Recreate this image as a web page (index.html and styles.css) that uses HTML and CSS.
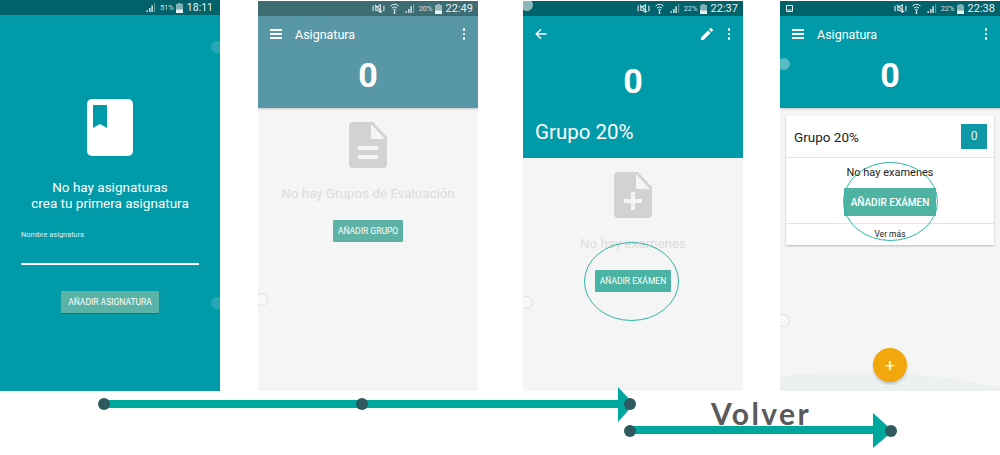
FILE: index.html
```html
<!DOCTYPE html>
<html lang="es">
<head>
    <meta charset="UTF-8">
    <title>Flujo de asignaturas</title>
    <link rel="stylesheet" href="styles.css">
</head>
<body>
    <svg class="defs" width="0" height="0">
        <symbol id="i-mute" viewBox="0 0 14 10">
            <path d="M1 2v6M13 2v6M4 3h2l3-2v8L6 7H4zM3 1l8 8" fill="none" stroke="currentColor" stroke-width="1.2"/>
        </symbol>
        <symbol id="i-wifi" viewBox="0 0 9 11">
            <path d="M0.5 3Q4.5 -0.5 8.5 3M2 5Q4.5 2.8 7 5M3.2 6.8Q4.5 5.8 5.8 6.8" fill="none" stroke="currentColor" stroke-width="1"/>
            <path d="M4.5 7.5v3.5" stroke="currentColor" stroke-width="1.4"/>
        </symbol>
        <symbol id="i-signal" viewBox="0 0 10 10">
            <path d="M0 10h1.5V8H0zM3 10h1.5V5.5H3zM5.5 10H7V2.5H5.5z" fill="currentColor"/>
            <path d="M8.6 10h1V0h-1z" fill="currentColor" opacity=".5"/>
        </symbol>
        <symbol id="i-battery" viewBox="0 0 7 10">
            <path d="M2 0h3v1h2v9H0V1h2z" fill="currentColor" opacity=".55"/>
            <path d="M0 6.5h7V10H0z" fill="currentColor"/>
        </symbol>
        <symbol id="i-doc" viewBox="0 0 38 46">
            <path d="M4 0h20l14 15v27a4 4 0 0 1-4 4H4a4 4 0 0 1-4-4V4a4 4 0 0 1 4-4z" fill="#d2d2d2"/>
            <path d="M22 2l14 15H22z" fill="#f5f5f5"/>
        </symbol>
    </svg>

    <div class="screens">
        <!-- pantalla 1: sin asignaturas -->
        <section class="screen screen-welcome">
            <div class="status status-dark">
                <svg class="ic-signal"><use href="#i-signal"/></svg>
                <span class="pct">51%</span>
                <svg class="ic-battery"><use href="#i-battery"/></svg>
                <span class="time">18:11</span>
            </div>
            <div class="welcome">
                <svg class="book" viewBox="0 0 46 57">
                    <rect width="46" height="57" rx="5" fill="#fff"/>
                    <path d="M6 6h14v23l-7-4-7 4z" fill="#009aa8"/>
                </svg>
                <p class="welcome-text">No hay asignaturas<br>crea tu primera asignatura</p>
                <label class="field-label">Nombre asignatura</label>
                <div class="field-line"></div>
                <button class="btn btn-welcome">AÑADIR ASIGNATURA</button>
            </div>
            <span class="dot dot-a"></span>
            <span class="dot dot-b"></span>
        </section>

        <!-- pantalla 2: sin grupos -->
        <section class="screen screen-dim">
            <div class="status status-dim">
                <svg class="ic-mute"><use href="#i-mute"/></svg>
                <svg class="ic-wifi"><use href="#i-wifi"/></svg>
                <svg class="ic-signal"><use href="#i-signal"/></svg>
                <span class="pct">20%</span>
                <svg class="ic-battery"><use href="#i-battery"/></svg>
                <span class="time">22:49</span>
            </div>
            <header class="appbar appbar-dim">
                <div class="toolbar">
                    <span class="burger"><i></i><i></i><i></i></span>
                    <span class="title">Asignatura</span>
                    <span class="more"><i></i><i></i><i></i></span>
                </div>
                <div class="count">0</div>
            </header>
            <div class="empty">
                <svg class="doc" viewBox="0 0 38 46">
                    <use href="#i-doc"/>
                    <path d="M9 24h20v4H9zM9 33h20v4H9z" fill="#f5f5f5"/>
                </svg>
                <p class="empty-text">No hay Grupos de Evaluación</p>
                <button class="btn btn-group">AÑADIR GRUPO</button>
            </div>
            <span class="ring ring-2"></span>
        </section>

        <!-- pantalla 3: grupo sin examenes -->
        <section class="screen">
            <div class="status status-dark">
                <svg class="ic-mute"><use href="#i-mute"/></svg>
                <svg class="ic-wifi"><use href="#i-wifi"/></svg>
                <svg class="ic-signal"><use href="#i-signal"/></svg>
                <span class="pct">22%</span>
                <svg class="ic-battery"><use href="#i-battery"/></svg>
                <span class="time">22:37</span>
            </div>
            <header class="appbar appbar-group">
                <div class="toolbar">
                    <svg class="back" viewBox="0 0 12 12">
                        <path d="M11.5 6H1.5M6 1.2L1.2 6 6 10.8" fill="none" stroke="#fff" stroke-width="1.4"/>
                    </svg>
                    <span class="title"></span>
                    <svg class="pencil" viewBox="0 0 12 12">
                        <path d="M0 9.5V12h2.5L9.6 4.9 7.1 2.4zM11.8 2.7a.7.7 0 0 0 0-1L10.3.2a.7.7 0 0 0-1 0L8 1.5 10.5 4z" fill="#fff"/>
                    </svg>
                    <span class="more"><i></i><i></i><i></i></span>
                </div>
                <div class="count count-group">0</div>
                <div class="group-name">Grupo 20%</div>
            </header>
            <div class="empty">
                <svg class="doc" viewBox="0 0 38 46">
                    <use href="#i-doc"/>
                    <path d="M17 20h4v7h7v4h-7v7h-4v-7h-7v-4h7z" fill="#f5f5f5"/>
                </svg>
                <p class="empty-text">No hay examenes</p>
                <button class="btn btn-exam">AÑADIR EXÁMEN</button>
            </div>
            <span class="dot dot-c"></span>
            <span class="ring ring-3"></span>
        </section>

        <!-- pantalla 4: grupo creado -->
        <section class="screen">
            <div class="status status-dark">
                <svg class="ic-pic" viewBox="0 0 7 7">
                    <path d="M.5.5h6v6h-6zM1.5 5h4" fill="none" stroke="currentColor"/>
                </svg>
                <span class="status-gap"></span>
                <svg class="ic-mute"><use href="#i-mute"/></svg>
                <svg class="ic-wifi"><use href="#i-wifi"/></svg>
                <svg class="ic-signal"><use href="#i-signal"/></svg>
                <span class="pct">22%</span>
                <svg class="ic-battery"><use href="#i-battery"/></svg>
                <span class="time">22:38</span>
            </div>
            <header class="appbar">
                <div class="toolbar">
                    <span class="burger"><i></i><i></i><i></i></span>
                    <span class="title">Asignatura</span>
                    <span class="more"><i></i><i></i><i></i></span>
                </div>
                <div class="count">0</div>
            </header>
            <div class="card">
                <div class="card-head">
                    <span>Grupo 20%</span>
                    <span class="badge">0</span>
                </div>
                <div class="card-body">
                    <p>No hay examenes</p>
                    <button class="btn btn-card">AÑADIR EXÁMEN</button>
                </div>
                <div class="card-foot">Ver más</div>
            </div>
            <span class="dot dot-d"></span>
            <span class="ring ring-4"></span>
            <span class="curve"></span>
            <span class="fab">+</span>
        </section>
    </div>

    <!-- flechas y marcas encima de las pantallas -->
    <svg class="marks" viewBox="0 0 1000 455">
        <ellipse cx="631.5" cy="281.5" rx="47" ry="39" fill="none" stroke="#2bb5a5" stroke-width="1"/>
        <ellipse cx="890.5" cy="201.5" rx="47" ry="39" fill="none" stroke="#2bb5a5" stroke-width="1"/>

        <path d="M104 400h516v8H104z" fill="#00a79c"/>
        <path d="M618 387l16 17-16 18z" fill="#00a79c"/>
        <circle cx="104" cy="404" r="6" fill="#2d5a5e"/>
        <circle cx="362" cy="404" r="6" fill="#2d5a5e"/>
        <circle cx="630" cy="404" r="6" fill="#2d5a5e"/>

        <path d="M630 426h246v8H630z" fill="#00a79c"/>
        <path d="M873 413l20 18-20 17z" fill="#00a79c"/>
        <circle cx="630" cy="431" r="6" fill="#2d5a5e"/>
        <circle cx="891" cy="431" r="6" fill="#2d5a5e"/>
    </svg>
    <div class="volver">Volver</div>
</body>
</html>
```

FILE: styles.css
```css
html, body {
    margin: 0;
    height: 455px;
    overflow: hidden;
    background: #fff;
}
body {
    position: relative;
    font-family: Roboto, "Liberation Sans", sans-serif;
}
p {
    margin: 0;
}
.defs {
    position: absolute;
}
.screens {
    display: flex;
    align-items: flex-start;
}
.screen {
    position: relative;
    display: flex;
    flex-direction: column;
    flex: none;
    width: 220px;
    height: 390px;
    margin-top: 1px;
    overflow: hidden;
    background: #f5f5f5;
}
.screen:nth-child(2) {
    margin-left: 38px;
}
.screen:nth-child(3) {
    margin-left: 45px;
}
.screen:nth-child(4) {
    margin-left: 37px;
}
.screen-welcome {
    height: 391px;
    margin-top: 0;
    background: #009aa8;
}

/* barra de estado */
.status {
    display: flex;
    align-items: center;
    flex: none;
    height: 15px;
    padding: 0 5px;
    justify-content: flex-end;
    color: #e8f1f2;
}
.status-dark {
    background: #02626b;
}
.status-dim {
    background: #3d6c72;
}
.screen-welcome .status {
    padding-right: 7px;
}
.status svg {
    flex: none;
}
.ic-mute {
    width: 13px;
    height: 9px;
    margin-right: 5px;
}
.ic-wifi {
    width: 9px;
    height: 11px;
    margin-right: 6px;
}
.ic-signal {
    width: 10px;
    height: 9px;
    margin-right: 4px;
}
.ic-battery {
    width: 7px;
    height: 10px;
    margin: 0 4px 0 2px;
}
.ic-pic {
    width: 7px;
    height: 7px;
    margin-left: 1px;
}
.status-gap {
    flex: 1;
}
.pct {
    font-size: 7.5px;
    opacity: .85;
}
.time {
    font-size: 11px;
    line-height: 15px;
}
.screen-welcome .time {
    font-size: 10.5px;
}

/* pantalla de bienvenida */
.welcome {
    display: flex;
    flex-direction: column;
    align-items: center;
    padding-top: 84px;
    color: #fff;
}
.book {
    width: 46px;
    height: 57px;
}
.welcome-text {
    margin-top: 23px;
    font-size: 13.5px;
    line-height: 16px;
    text-align: center;
}
.field-label {
    align-self: flex-start;
    margin: 19px 0 0 21px;
    color: #d8f0f2;
    font-size: 7.4px;
    line-height: 10px;
}
.field-line {
    align-self: flex-start;
    width: 178px;
    height: 1.5px;
    margin: 23px 0 0 21px;
    background: #fff;
}

/* botones */
.btn {
    display: block;
    padding: 0;
    border: none;
    border-radius: 1px;
    color: #fff;
    font-family: Roboto, "Liberation Sans", sans-serif;
    text-align: center;
}
.btn-welcome {
    width: 98px;
    height: 22px;
    margin-top: 26px;
    background: #5ab3a6;
    font-size: 8.5px;
    box-shadow: 0 1px 1px rgba(0, 60, 70, .3);
}
.btn-group {
    width: 70px;
    height: 22px;
    margin-top: 17px;
    background: #5eb2a5;
    font-size: 8.5px;
}
.btn-exam {
    width: 76px;
    height: 22px;
    margin-top: 17px;
    background: #4bb3a3;
    font-size: 8.5px;
}
.btn-card {
    width: 92px;
    height: 28px;
    margin: 9px auto 0;
    background: #4fb3a3;
    font-size: 10px;
    font-weight: 500;
}

/* cabecera */
.appbar {
    flex: none;
    height: 92px;
    background: #009aa8;
    color: #fff;
    box-shadow: 0 1px 2px rgba(0, 0, 0, .2);
}
.appbar-dim {
    background: #5898a6;
}
.appbar-group {
    height: 142px;
    box-shadow: none;
}
.toolbar {
    display: flex;
    align-items: center;
    height: 36px;
    padding: 0 12px;
}
.burger {
    display: flex;
    flex-direction: column;
    gap: 2.5px;
    width: 12px;
}
.burger i {
    display: block;
    height: 1.5px;
    background: #fff;
}
.title {
    flex: 1;
    margin-left: 13px;
    font-size: 12.5px;
}
.more {
    display: flex;
    flex-direction: column;
    gap: 2px;
    margin-right: 1px;
}
.more i {
    display: block;
    width: 2.5px;
    height: 2.5px;
    border-radius: 50%;
    background: #fff;
}
.back {
    width: 12px;
    height: 12px;
}
.pencil {
    width: 12px;
    height: 12px;
    margin-right: 15px;
}
.count {
    margin-top: 3px;
    font-size: 34px;
    font-weight: 700;
    line-height: 40px;
    text-align: center;
}
.count-group {
    margin-top: 9px;
}
.group-name {
    margin: 18px 0 0 12px;
    font-size: 20.5px;
    line-height: 26px;
}

/* estados vacios */
.empty {
    display: flex;
    flex-direction: column;
    align-items: center;
    padding-top: 14px;
}
.doc {
    width: 38px;
    height: 46px;
}
.empty-text {
    margin-top: 17px;
    color: #dcdcdc;
    font-size: 13.4px;
    line-height: 18px;
}

/* tarjeta */
.card {
    display: flex;
    flex-direction: column;
    margin: 8px 6px 0;
    height: 129px;
    background: #fff;
    box-shadow: 0 1px 2px rgba(0, 0, 0, .25);
    color: #222;
}
.card-head {
    display: flex;
    align-items: center;
    justify-content: space-between;
    flex: none;
    height: 41px;
    padding: 0 7px 0 8px;
    border-bottom: 1px solid #e4e4e4;
    font-size: 13.5px;
}
.badge {
    width: 26px;
    height: 25px;
    background: #0e98a6;
    color: #e8f6f7;
    font-size: 12px;
    line-height: 25px;
    text-align: center;
}
.card-body {
    flex: none;
    height: 66px;
    padding-top: 8px;
    box-sizing: border-box;
    border-bottom: 1px solid #e4e4e4;
    text-align: center;
    font-size: 11px;
}
.card-body p {
    line-height: 13px;
}
.card-foot {
    font-size: 8.5px;
    line-height: 21px;
    text-align: center;
}

/* tactos, boton flotante */
.dot {
    position: absolute;
    width: 12px;
    height: 12px;
    border-radius: 50%;
    background: rgba(255, 255, 255, .15);
}
.dot-a {
    top: 41px;
    right: -3px;
}
.dot-b {
    top: 297px;
    right: -3px;
}
.dot-c {
    top: -2px;
    left: -2px;
    background: rgba(255, 255, 255, .55);
}
.dot-d {
    top: 57px;
    left: -2px;
    background: rgba(255, 255, 255, .35);
}
.ring {
    position: absolute;
    left: -3px;
    width: 11px;
    height: 11px;
    border: 1px solid #dcdce6;
    border-radius: 50%;
    background: #f8f8f8;
}
.ring-2 {
    top: 292px;
}
.ring-3 {
    top: 295px;
}
.ring-4 {
    top: 313px;
}
.curve {
    position: absolute;
    left: -225px;
    top: 371px;
    width: 600px;
    height: 252px;
    border-radius: 50%;
    background: #ecf0f1;
}
.fab {
    position: absolute;
    left: 93px;
    top: 347px;
    width: 34px;
    height: 34px;
    border-radius: 50%;
    background: #f2a80c;
    box-shadow: 0 2px 3px rgba(0, 0, 0, .2);
    color: #fff;
    font-size: 17px;
    line-height: 34px;
    text-align: center;
}

/* anotaciones */
.marks {
    position: absolute;
    left: 0;
    top: 0;
    width: 1000px;
    height: 455px;
    pointer-events: none;
}
.volver {
    position: absolute;
    left: 711px;
    top: 395px;
    color: #5a5a5a;
    font-family: Lato, "Liberation Sans", sans-serif;
    font-size: 30px;
    font-weight: 700;
    letter-spacing: 2.4px;
    line-height: 36px;
}
```
